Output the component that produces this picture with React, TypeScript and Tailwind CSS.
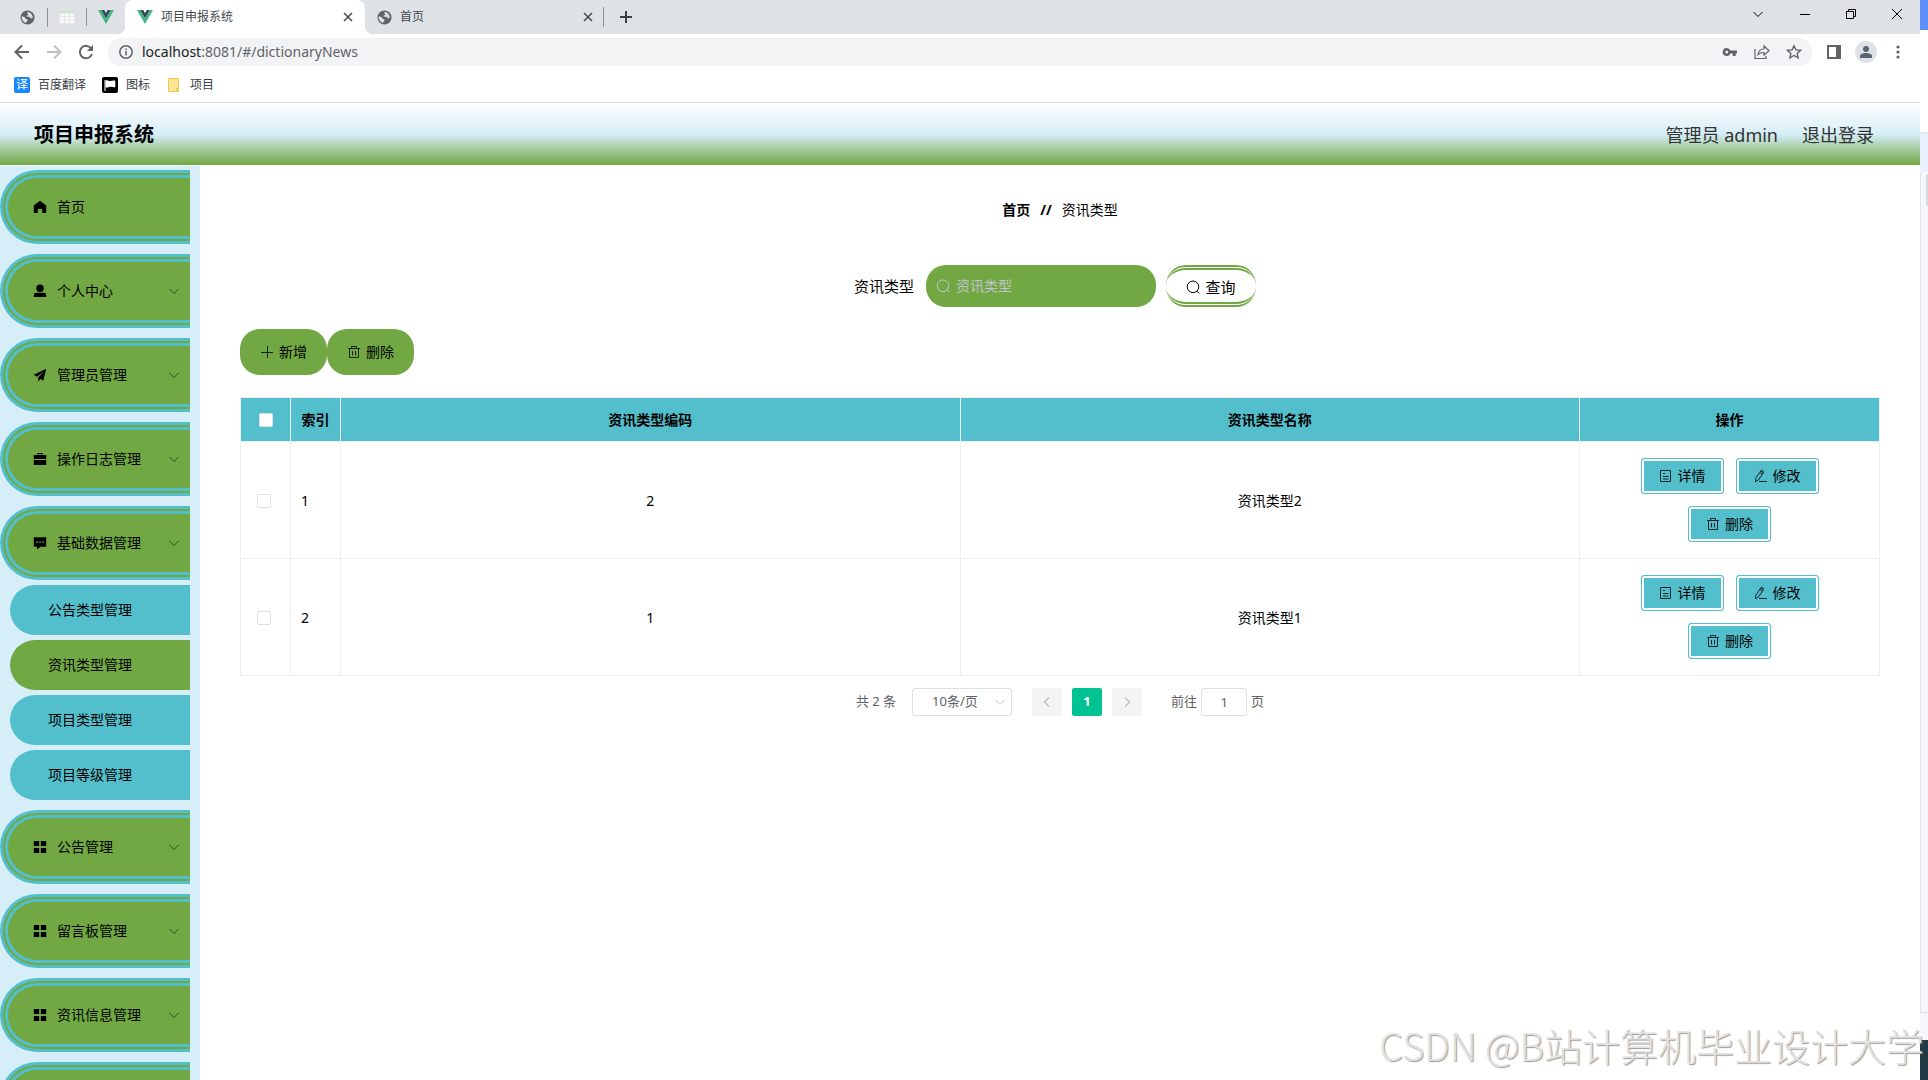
import React from "react";

type IconProps = { className?: string };

const Globe = ({ className = "" }: IconProps) => (
  <svg viewBox="0 0 16 16" className={className} aria-hidden="true">
    <circle cx="8" cy="8" r="7.5" fill="#5f6368" />
    <path d="M8.6 2c-1.500.4-1.200 1.500-.2 2.100 1 .5.2 1.700-.9 1.700-1 0-.6 1.300.5 1.300 1.700 0 3 .2 3.200 1.300.2 1 1.400.7 2.300.1.500-2.800-1.800-6-4.900-6.500zM1.900 6.500c-.6 3.300 1.200 6.200 4.400 7.300.2-1 .9-1.400 1.500-2 .8-.9.100-1.900-1-2.100-1.200-.3-1-1.400-1.900-2C4 7 2.700 7.600 1.900 6.500z" fill="#dee1e6" />
  </svg>
);

const Vue = ({ className = "" }: IconProps) => (
  <svg viewBox="0 0 16 14" className={className} aria-hidden="true">
    <path d="M0 0h3.200L8 8.300 12.800 0H16L8 14z" fill="#41b883" />
    <path d="M3.200 0h3L8 3.100 9.800 0h3L8 8.300z" fill="#35495e" />
  </svg>
);

const Sheet = ({ className = "" }: IconProps) => (
  <svg viewBox="0 0 16 14" className={className} aria-hidden="true">
    <path d="M.5 1.500h15v12H.5z" fill="#fafafa" stroke="#e6e8e8" />
    <path d="M0 1h16v2.500H0z" fill="#cbe5cb" />
    <path d="M.5 6.500h15M.5 10h15M5.500 4v9.500M10.500 4v9.500" stroke="#e6e8e8" fill="none" />
  </svg>
);

const Cross = ({ className = "" }: IconProps) => (
  <svg viewBox="0 0 10 10" className={className} fill="none" stroke="currentColor" aria-hidden="true">
    <path d="M1 1l8 8M9 1L1 9" strokeWidth="1.500" />
  </svg>
);

const ChevronDown = ({ className = "" }: IconProps) => (
  <svg viewBox="0 0 12 12" className={className} fill="none" stroke="currentColor" aria-hidden="true">
    <path d="M1.500 4L6 8.500 10.500 4" />
  </svg>
);

const Search = ({ className = "" }: IconProps) => (
  <svg viewBox="0 0 14 14" className={className} fill="none" stroke="currentColor" aria-hidden="true">
    <circle cx="7" cy="6.800" r="5.800" />
    <path d="M10.800 11l2.500 2.500" />
  </svg>
);

const Trash = ({ className = "" }: IconProps) => (
  <svg viewBox="0 0 14 14" className={className} fill="none" stroke="currentColor" aria-hidden="true">
    <path d="M1 3.500h12M4.500 3V1.500h5V3M2.500 3.500v9h9v-9M5.500 6v4.500M8.500 6v4.500" />
  </svg>
);

const Plus = ({ className = "" }: IconProps) => (
  <svg viewBox="0 0 14 14" className={className} fill="none" stroke="currentColor" aria-hidden="true">
    <path d="M1 7.500h12M7.500 1v12" />
  </svg>
);

const Doc = ({ className = "" }: IconProps) => (
  <svg viewBox="0 0 14 14" className={className} fill="none" stroke="currentColor" aria-hidden="true">
    <path d="M1.500 1.500h10v11h-10zM4 4.500h2M4 7.500h5.500M4 10h5.500" />
  </svg>
);

const Pen = ({ className = "" }: IconProps) => (
  <svg viewBox="0 0 14 14" className={className} fill="none" stroke="currentColor" aria-hidden="true">
    <path d="M6.800 2L9.300 3.800 4.400 11 1.500 12.700 1.800 9.200zM6.800 2c.6-.9 1.300-1 2-.5s.9 1.400.5 2.300M5.800 3.400l2.500 1.800M5 12.500h8" />
  </svg>
);

const menuPaths = {
  home: "M7 .8L.8 5.600V13h4V9h4.400v4h4V5.600z",
  user: "M7 .5a3.400 3.400 0 100 7.500 3.700 3.700 0 000-7.500zM3 8.800h8c1.500 0 2.200 1 2.200 2.300v2H.8v-2C.8 9.800 1.500 8.800 3 8.800z",
  plane: "M13.300.8L.7 6.700l3.300 2L11 3.600 5.300 9.400v4.200l2-2.600 3 1.500z",
  briefcase: "M4.500 3V1h5v2h3.700v4H.8V3zM5.500 3h3V2h-3zM.8 8h12.400v5H.8z",
  chat: "M.8 1.200h12.400v9.500H7.500L4 13.500v-2.800H.8zM3.300 5.200v1.500h1.500V5.200zm3 0v1.500h1.500V5.200zm3 0v1.500h1.500V5.200z",
  grid: "M.8 1h5.400v5H.8zM7.800 1h5.400v5H7.800zM.8 8h5.400v5H.8zM7.800 8h5.400v5H7.800z",
};

type MenuEntry = { label: string; icon: keyof typeof menuPaths; children?: string[]; leaf?: boolean };

const menu: MenuEntry[] = [
  { label: "首页", icon: "home", leaf: true },
  { label: "个人中心", icon: "user" },
  { label: "管理员管理", icon: "plane" },
  { label: "操作日志管理", icon: "briefcase" },
  {
    label: "基础数据管理",
    icon: "chat",
    children: ["公告类型管理", "资讯类型管理", "项目类型管理", "项目等级管理"],
  },
  { label: "公告管理", icon: "grid" },
  { label: "留言板管理", icon: "grid" },
  { label: "资讯信息管理", icon: "grid" },
];

const rows = [
  { index: 1, code: "2", name: "资讯类型2" },
  { index: 2, code: "1", name: "资讯类型1" },
];

function TabStrip() {
  return (
    <div className="flex h-[34px] shrink-0 items-center justify-between bg-[#dee1e6] text-xs text-[#45494d]">
      <div className="flex h-full items-center">
        <button aria-label="标签页 1" className="flex w-12 justify-center border-r border-[#8d9196] py-[2px] pl-2">
          <Globe className="size-[15px]" />
        </button>
        <button aria-label="标签页 2" className="flex w-[39px] justify-center border-r border-[#8d9196] py-[2px]">
          <Sheet className="h-[14px] w-4" />
        </button>
        <button aria-label="标签页 3" className="flex w-[38px] justify-center">
          <Vue className="h-[14px] w-4" />
        </button>
        <div className="relative flex h-full w-60 items-center rounded-t-lg bg-white pr-3 pl-3">
          <span className="absolute bottom-0 -left-2 size-2 bg-[radial-gradient(circle_at_0_0,#dee1e6_8px,#fff_8px)]" />
          <span className="absolute -right-2 bottom-0 size-2 bg-[radial-gradient(circle_at_100%_0,#dee1e6_8px,#fff_8px)]" />
          <Vue className="h-[14px] w-4" />
          <span className="ml-2 flex-1">项目申报系统</span>
          <button aria-label="关闭标签页"><Cross className="size-[10px]" /></button>
        </div>
        <div className="mr-[10px] flex w-[228px] items-center pl-3">
          <Globe className="size-[15px]" />
          <span className="ml-2 flex-1">首页</span>
          <button aria-label="关闭标签页"><Cross className="size-[10px]" /></button>
        </div>
        <button aria-label="新建标签页" className="flex h-5 items-center border-l border-[#8d9196] pl-4">
          <svg viewBox="0 0 12 12" className="size-3" fill="none" stroke="#3c4043" strokeWidth="2">
            <path d="M0 6h12M6 0v12" />
          </svg>
        </button>
      </div>
      <div className="flex items-center gap-9 pr-[18px] pb-[6px] text-black">
        <button aria-label="搜索标签页">
          <ChevronDown className="size-3" />
        </button>
        <button aria-label="最小化">
          <svg viewBox="0 0 10 10" className="size-[10px]" stroke="currentColor"><path d="M0 5.500h10" /></svg>
        </button>
        <button aria-label="还原">
          <svg viewBox="0 0 10 10" className="size-[10px]" fill="none" stroke="currentColor">
            <path d="M.5 2.500h7v7h-7zM2.500 2.500v-2h7v7h-2" />
          </svg>
        </button>
        <button aria-label="关闭">
          <svg viewBox="0 0 10 10" className="size-[10px]" fill="none" stroke="currentColor"><path d="M0 0l10 10M10 0L0 10" /></svg>
        </button>
      </div>
    </div>
  );
}

function Toolbar() {
  return (
    <div className="flex h-9 shrink-0 items-center pr-5 pl-[14px] text-[#5f6368]">
      <button aria-label="后退">
        <svg viewBox="0 0 16 16" className="size-4" fill="none" stroke="currentColor" strokeWidth="2">
          <path d="M15 8H2M8 1.500L1.500 8 8 14.500" />
        </svg>
      </button>
      <button aria-label="前进" className="ml-4 text-[#bdc1c6]">
        <svg viewBox="0 0 16 16" className="size-4" fill="none" stroke="currentColor" strokeWidth="2">
          <path d="M1 8h13M8 1.500L14.500 8 8 14.500" />
        </svg>
      </button>
      <button aria-label="重新加载" className="ml-4">
        <svg viewBox="0 0 16 16" className="size-4" fill="none" stroke="currentColor" strokeWidth="2">
          <path d="M13.500 5A6.200 6.200 0 1014 10" />
          <path d="M15 1v6H9z" fill="currentColor" stroke="none" />
        </svg>
      </button>
      <div className="ml-[14px] flex h-7 flex-1 items-center rounded-full bg-[#f1f3f4] pr-[10px] pl-[11px]">
        <svg viewBox="0 0 14 14" className="size-[14px]" fill="none" stroke="currentColor" strokeWidth="1.500">
          <circle cx="7" cy="7" r="6.200" />
          <path d="M7 6v4.500M7 3.500V5" />
        </svg>
        <p className="ml-[9px] flex-1 text-sm">
          <span className="text-[#202124]">localhost</span>:8081/#/dictionaryNews
        </p>
        <div className="flex items-center gap-4">
          <button aria-label="密码">
            <svg viewBox="0 0 16 16" className="size-4" fill="currentColor">
              <path fillRule="evenodd" d="M4.800 4a4 4 0 103.600 5.500h2.300V12h3V9.500H15v-3H8.400A4 4 0 004.800 4zm0 2.500a1.500 1.500 0 110 3 1.500 1.500 0 010-3z" />
            </svg>
          </button>
          <button aria-label="分享">
            <svg viewBox="0 0 16 16" className="size-4" fill="none" stroke="currentColor" strokeWidth="1.200">
              <path d="M1 5v9.500h11V12M4 10.500C4.500 7 7 5 10 5V2l5 4.700-5 4.500V8.500c-2.500 0-4.500.5-6 2z" />
            </svg>
          </button>
          <button aria-label="收藏">
            <svg viewBox="0 0 16 16" className="size-4" fill="none" stroke="currentColor" strokeWidth="1.400">
              <path d="M8 1.800l1.900 4.100 4.600.5-3.400 3 1 4.400L8 11.500l-4.100 2.300 1-4.400-3.400-3 4.600-.5z" />
            </svg>
          </button>
        </div>
      </div>
      <button aria-label="侧边栏" className="ml-[15px]">
        <svg viewBox="0 0 14 14" className="size-[14px]" fill="currentColor">
          <path fillRule="evenodd" d="M0 0h14v14H0zM2 2v10h7V2z" />
        </svg>
      </button>
      <button aria-label="用户" className="ml-[14px] rounded-full bg-[#dee1e6] p-[5px]">
        <svg viewBox="0 0 12 12" className="size-3" fill="#5b6473">
          <circle cx="6" cy="3" r="3" />
          <path d="M0 12v-2c0-2 3-3 6-3s6 1 6 3v2z" />
        </svg>
      </button>
      <button aria-label="菜单" className="ml-[19px]">
        <svg viewBox="0 0 4 14" className="h-[14px] w-1" fill="currentColor">
          <circle cx="2" cy="2" r="1.600" /><circle cx="2" cy="7" r="1.600" /><circle cx="2" cy="12" r="1.600" />
        </svg>
      </button>
    </div>
  );
}

function Bookmarks() {
  return (
    <div className="flex h-[33px] shrink-0 items-center border-b border-[#dadce0] pb-[2px] pl-[14px] text-xs text-[#3c4043]">
      <a href="#fanyi" className="flex items-center gap-2">
        <span className="flex size-4 items-center justify-center rounded-[2px] bg-[#1787fb] text-xs leading-4 text-white">译</span>
        百度翻译
      </a>
      <a href="#icons" className="ml-4 flex items-center gap-2">
        <svg viewBox="0 0 16 16" className="size-4">
          <rect width="16" height="16" rx="2" />
          <path d="M3.500 13V3.500c2-1 3.500.8 5 .6 1.500-.2 2.500-.9 4.800-.4V10c-2 .7-3.500-.5-5-.2-1.500.3-2.300.8-4.800.7z" fill="#fff" />
          <path d="M3 3v11" stroke="#fff" />
        </svg>
        图标
      </a>
      <a href="#projects" className="ml-[18px] flex items-center gap-[11px]">
        <svg viewBox="0 0 11 14" className="h-[14px] w-[11px]">
          <path d="M.5.500h10v9.500l.3 3.500H.5z" fill="#ffe694" stroke="#eac54f" />
          <path d="M8.500 13.500v-3h2" fill="none" stroke="#eac54f" />
        </svg>
        项目
      </a>
    </div>
  );
}

function Sidebar() {
  return (
    <nav className="w-[200px] shrink-0 overflow-hidden bg-[#d6eef8] pt-1 pr-[10px]">
      {menu.map((m) => (
        <div key={m.label} className="mb-[10px]">
          <button className="flex h-[74px] w-full items-center rounded-l-full border-8 border-r-0 border-double border-[#54bfcc] bg-[#71a843] pr-[10px] pl-[25px] text-sm text-black">
            <svg viewBox="0 0 14 14" className="size-[14px]" fillRule="evenodd">
              <path d={menuPaths[m.icon]} />
            </svg>
            <span className="ml-[10px] flex-1 text-left">{m.label}</span>
            {!m.leaf && <ChevronDown className="size-3 text-[#2f4a1c]" />}
          </button>
          {m.children && (
            <ul className="mt-[5px] flex flex-col gap-[5px] pl-[10px]">
              {m.children.map((c) => (
                <li key={c}>
                  <a
                    href="#/dictionaryNews"
                    className={`flex h-[50px] items-center rounded-l-full pl-[38px] text-sm text-black ${
                      c === "资讯类型管理" ? "bg-[#71a843]" : "bg-[#54bfcc]"
                    }`}
                  >
                    {c}
                  </a>
                </li>
              ))}
            </ul>
          )}
        </div>
      ))}
      <button
        aria-label="更多菜单"
        className="block h-[74px] w-full rounded-l-full border-8 border-r-0 border-double border-[#54bfcc] bg-[#71a843]"
      />
    </nav>
  );
}

function ActionButton({ icon, children }: { icon: React.ReactNode; children: React.ReactNode }) {
  return (
    <button className="flex h-9 items-center gap-[5px] rounded-[3px] border border-[#54bfcc] bg-[#54bfcc] px-[17px] text-sm text-black shadow-[inset_0_0_0_2px_#fff]">
      {icon}
      {children}
    </button>
  );
}

const Check = ({ label }: { label: string }) => (
  <input
    type="checkbox"
    aria-label={label}
    className="block size-[14px] appearance-none rounded-[2px] border border-[#dcdfe6] bg-white"
  />
);

function DataTable() {
  return (
    <table className="mt-[22px] w-full table-fixed border-collapse text-center text-sm text-black [&_td]:border [&_td]:border-[#ebeef5] [&_th]:border [&_th]:border-[#ebeef5]">
      <colgroup>
        <col className="w-[50px]" />
        <col className="w-[50px]" />
        <col />
        <col />
        <col className="w-[300px]" />
      </colgroup>
      <thead>
        <tr className="h-11 bg-[#54bfcc]">
          <th className="pl-[18px]"><Check label="全选" /></th>
          <th className="whitespace-nowrap font-bold">索引</th>
          <th className="font-bold">资讯类型编码</th>
          <th className="font-bold">资讯类型名称</th>
          <th className="font-bold">操作</th>
        </tr>
      </thead>
      <tbody>
        {rows.map((r) => (
          <tr key={r.index} className="h-[117px]">
            <td className="pt-px pl-4"><Check label={`选择第${r.index}行`} /></td>
            <td className="pt-px pl-[10px] text-left">{r.index}</td>
            <td className="pt-px">{r.code}</td>
            <td className="pt-px">{r.name}</td>
            <td className="px-10">
              <div className="flex flex-wrap justify-center gap-3">
                <ActionButton icon={<Doc className="size-[14px] opacity-80" />}>详情</ActionButton>
                <ActionButton icon={<Pen className="size-[14px] opacity-80" />}>修改</ActionButton>
                <ActionButton icon={<Trash className="size-[14px] opacity-80" />}>删除</ActionButton>
              </div>
            </td>
          </tr>
        ))}
      </tbody>
    </table>
  );
}

function Pagination() {
  return (
    <div className="mt-3 flex items-center justify-center text-[13px] text-[#606266]">
      <span>共 2 条</span>
      <div className="relative ml-4">
        <select
          aria-label="每页条数"
          className="block h-7 w-[100px] appearance-none rounded-[3px] border border-[#dcdfe6] bg-white pl-[19px] text-[13px]"
        >
          <option>10条/页</option>
        </select>
        <ChevronDown className="pointer-events-none absolute top-2 right-[6px] size-3 text-[#c0c4cc]" />
      </div>
      <button aria-label="上一页" disabled className="ml-5 flex h-7 w-[30px] items-center justify-center rounded-[2px] bg-[#f4f4f5] text-[#c0c4cc]">
        <ChevronDown className="size-3 rotate-90 stroke-[1.5]" />
      </button>
      <button className="ml-[10px] h-7 w-[30px] rounded-[2px] bg-[#00c292] font-bold text-white">1</button>
      <button aria-label="下一页" disabled className="ml-[10px] flex h-7 w-[30px] items-center justify-center rounded-[2px] bg-[#f4f4f5] text-[#c0c4cc]">
        <ChevronDown className="size-3 -rotate-90 stroke-[1.5]" />
      </button>
      <label className="ml-[29px] flex items-center gap-1">
        前往
        <input defaultValue="1" className="h-7 w-[46px] rounded-[3px] border border-[#dcdfe6] text-center" />
        页
      </label>
    </div>
  );
}

function Main() {
  return (
    <main className="min-w-0 flex-1 px-10 pt-[34px]">
      <div className="flex justify-center gap-[10px] text-sm leading-5 text-black">
        <a href="#/" className="font-bold">首页</a>
        <span className="font-bold">//</span>
        <span>资讯类型</span>
      </div>
      <form className="mt-[45px] flex items-center justify-center pr-[10px] text-[15px] text-black">
        <label htmlFor="type">资讯类型</label>
        <div className="ml-3 flex h-[42px] w-[230px] items-center rounded-[20px] bg-[#71a843] px-[10px] text-[#c0c4cc]">
          <Search className="size-[14px]" />
          <input
            id="type"
            placeholder="资讯类型"
            className="ml-[6px] w-0 flex-1 bg-transparent text-sm outline-none placeholder:text-[#c0c4cc]"
          />
        </div>
        <button
          type="button"
          className="ml-[10px] flex h-[42px] w-[90px] items-center justify-center gap-[5px] rounded-[20px] border-y-[5px] border-double border-[#71a843] bg-white pt-[2px]"
        >
          <Search className="size-[14px]" />
          查询
        </button>
      </form>
      <div className="mt-[22px] flex text-sm text-black">
        <button className="flex h-[46px] w-[87px] items-center justify-center gap-[5px] rounded-[20px] bg-[#71a843]">
          <Plus className="size-[14px] opacity-80" />
          新增
        </button>
        <button className="flex h-[46px] w-[87px] items-center justify-center gap-[5px] rounded-[20px] bg-[#71a843]">
          <Trash className="size-[14px] opacity-80" />
          删除
        </button>
      </div>
      <DataTable />
      <Pagination />
    </main>
  );
}

export default function App() {
  return (
    <div className="relative flex h-screen overflow-hidden bg-white font-['Noto_Sans','Noto_Sans_CJK_SC',sans-serif]">
      <div className="flex min-w-0 flex-1 flex-col">
        <TabStrip />
        <Toolbar />
        <Bookmarks />
        <header className="mb-px flex h-[62px] shrink-0 items-center justify-between bg-[linear-gradient(#fff,#d6eef8_50%,#71a843)] pt-[2px] pr-[46px] pl-[34px]">
          <h1 className="text-xl font-bold text-black">项目申报系统</h1>
          <div className="flex gap-6 text-lg text-[#333]">
            <span>管理员 admin</span>
            <a href="#/login">退出登录</a>
          </div>
        </header>
        <div className="flex min-h-0 flex-1">
          <Sidebar />
          <Main />
        </div>
      </div>
      <aside className="flex w-2 shrink-0 flex-col">
        <div className="h-[30px] bg-[#5e90fa]" />
        <div className="h-[102px] bg-white" />
        <div className="h-10 border-t-2 border-[#dfe5f2] bg-[#e9f0fe]" />
        <div className="flex flex-1 justify-end border-l border-[#e3e5ec] bg-[#f6f7fb] pt-[2px]">
          <div className="h-8 w-[2px] rounded-l bg-[#d5dce1]" />
        </div>
        <div className="h-7 border-t border-[#dcdee4] bg-[#f6f7fb]" />
        <div className="h-10 bg-[#213a44]" />
      </aside>
      <p className="pointer-events-none absolute right-[4px] bottom-[7px] font-['Noto_Sans_CJK_SC',sans-serif] text-[38px] font-light whitespace-nowrap text-[#e2e2e2] [text-shadow:1px_1px_1px_#999]">
        CSDN @B站计算机毕业设计大学
      </p>
    </div>
  );
}
